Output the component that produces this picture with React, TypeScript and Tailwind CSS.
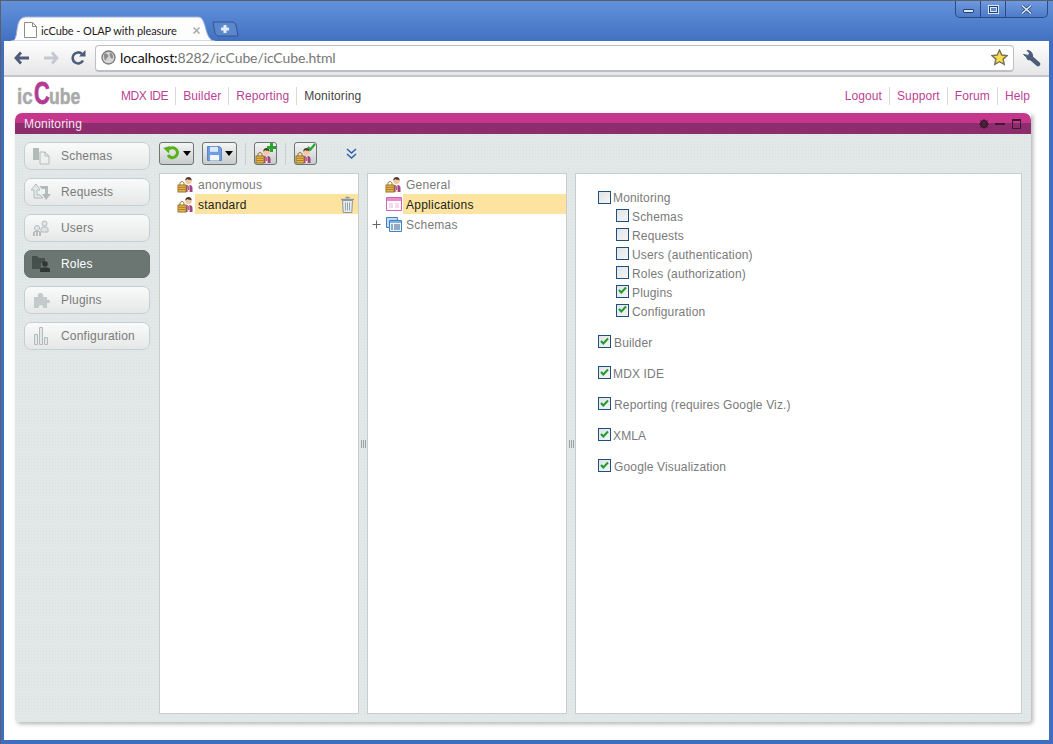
import type { ReactNode } from 'react'

const font = "[font-family:'Liberation_Sans',Arial,sans-serif]"

function RoleIcon() {
  return (
    <svg width="17" height="17" viewBox="0 0 17 17" className="shrink-0">
      <path d="M8 16v-4.500c0-1.500 1.200-2.500 2.500-2.500h2c1.800 0 3 1.200 3 3v4z" fill="#a0467f" />
      <path d="M10.800 9h1.600l.3 7h-2.200z" fill="#f4e6ee" />
      <path d="M11.300 10h.7l.2 4h-1z" fill="#b23a6a" />
      <circle cx="11.500" cy="5" r="3.200" fill="#f0c9a0" />
      <path d="M8.200 4.600C8.200 2 10 1 11.600 1s3 1.100 3 3.200c-1.500-.2-3.500-.2-4.500-1.200-.3.8-1 1.300-1.900 1.600z" fill="#4a3a30" />
      <path d="M3 9V7.500C3 6.300 3.900 5.600 5 5.600s2 .7 2 1.900V9" fill="none" stroke="#8a6a2a" />
      <rect x="1" y="9" width="8" height="7" fill="#e6b54a" stroke="#9a7226" />
      <path d="M1.500 11.300h7M1.500 13.500h7" stroke="#a8802e" />
    </svg>
  )
}

function SchemaIcon({ name }: { name: string }) {
  const c = name === 'Roles' ? '#3f4846' : '#b4baba'
  if (name === 'Schemas') {
    return (
      <svg width="18" height="18" viewBox="0 0 18 18">
        <path d="M1 1h6v12H1z" fill={c} />
        <path d="M8 5h5l4 4v8H8z" fill="#eef0f0" stroke={c} />
        <path d="M13 5v4h4" fill="none" stroke={c} />
      </svg>
    )
  }
  if (name === 'Requests') {
    return (
      <svg width="20" height="18" viewBox="0 0 20 18">
        <path d="M5 1 0 7h3v8h9l-3-3H6V7h3z" fill="#e4e7e7" stroke={c} />
        <path d="M15 17l5-6h-3V3H8l3 3h3v5h-3z" fill={c} />
      </svg>
    )
  }
  if (name === 'Users') {
    return (
      <svg width="18" height="17" viewBox="0 0 18 17">
        <circle cx="12.500" cy="3.500" r="2.500" fill="#e4e7e7" stroke={c} />
        <path d="M9 12V9c0-1 1-2 2-2h3c1 0 2 1 2 2v3z" fill="#dfe2e2" stroke={c} />
        <circle cx="5" cy="8" r="2.500" fill="#e4e7e7" stroke={c} />
        <path d="M1 16v-3c0-1 1-2 2-2h4c1 0 2 1 2 2v3z" fill={c} />
        <path d="M3.500 12v4M6.500 12v4" stroke="#eef0f0" />
      </svg>
    )
  }
  if (name === 'Roles') {
    return (
      <svg width="19" height="18" viewBox="0 0 19 18">
        <path d="M0 1h5l2 2h6v5H9v6H0z" fill="#454f4c" />
        <circle cx="13" cy="9" r="2.800" fill="#2f3735" />
        <path d="M8 17v-2c0-1.500 1-2.500 2.500-2.500h5c1.500 0 2.500 1 2.500 2.500v2z" fill="#2f3735" />
      </svg>
    )
  }
  if (name === 'Plugins') {
    return (
      <svg width="17" height="17" viewBox="0 0 17 17">
        <path d="M1 5h4c-1-3 1-4 2.500-4S11 2 10 5h4v3c2-1 3 .2 3 1.500S16 12 14 11v5h-4c.8-2-.6-2.800-2-2.800S5 14 6 16H1z" fill="#c4caca" />
      </svg>
    )
  }
  return (
    <svg width="15" height="18" viewBox="0 0 15 18">
      <path d="M.5 7.500h3v10h-3zM5.500.5h3v17h-3zM10.500 10.500h3v7h-3z" fill="#e4e7e7" stroke="#b4baba" />
    </svg>
  )
}

function SideButton({ name, active }: { name: string; active?: boolean }) {
  return (
    <div
      className={`flex h-[28px] w-[126px] items-center rounded-[7px] border ${
        active
          ? 'border-[#66716e] bg-[#6b7672] text-white'
          : 'border-[#c6cfcf] bg-gradient-to-b from-[#f9fafa] to-[#e6e8e8] text-[#7a7a7a]'
      }`}
    >
      <span className="flex w-[36px] shrink-0 justify-center pr-[4px]">
        <SchemaIcon name={name} />
      </span>
      <span className="tracking-[0.2px]">{name}</span>
    </div>
  )
}

function ToolButton({ children, w }: { children: ReactNode; w: string }) {
  return (
    <div className={`flex h-[23px] items-center justify-center rounded-[3px] border border-[#6f7472] bg-gradient-to-b from-[#f4f5f5] to-[#c9cccc] ${w}`}>
      {children}
    </div>
  )
}

function Caret() {
  return <span className="ml-[3px] h-0 w-0 border-x-[4px] border-t-[5px] border-x-transparent border-t-black" />
}

function Check({ on }: { on?: boolean }) {
  return (
    <span className="flex h-[13px] w-[13px] shrink-0 items-center justify-center border border-[#1d4f7f] bg-gradient-to-br from-[#e2e4e4] to-[#f4f4f4]">
      {on && (
        <svg width="11" height="10" viewBox="0 0 11 10">
          <path d="M2 4 4.300 6.500 9 1.500" fill="none" stroke="#1f9a2e" strokeWidth="2" />
        </svg>
      )}
    </span>
  )
}

function Splitter() {
  return (
    <div className="flex w-[8px] shrink-0 items-center justify-center gap-px">
      <span className="h-[8px] w-px bg-[#9aa2a2]" />
      <span className="h-[8px] w-px bg-[#9aa2a2]" />
      <span className="h-[8px] w-px bg-[#9aa2a2]" />
    </div>
  )
}

function TreeRow({ icon, label, selected, plus, trash }: { icon: ReactNode; label: string; selected?: boolean; plus?: boolean; trash?: boolean }) {
  return (
    <div className="flex h-[20px] items-center">
      <span className="flex w-[16px] shrink-0 justify-center">
        {plus && (
          <svg width="9" height="9" viewBox="0 0 9 9">
            <path d="M.5 4.500h8M4.500.5v8" stroke="#666" />
          </svg>
        )}
      </span>
      <span className="flex w-[19px] shrink-0 justify-center">{icon}</span>
      <span className={`flex h-[20px] flex-1 items-center justify-between pl-[3px] pr-[3px] pt-[2px] tracking-[0.25px] ${selected ? 'bg-[#fce4a0] text-[#222]' : 'text-[#7a7a7a]'}`}>
        {label}
        {trash && (
          <svg width="15" height="17" viewBox="0 0 15 17" className="-mt-[2px]">
            <path d="M1 3.500h13M5.500 1.500h4" stroke="#8b989f" strokeWidth="1.500" />
            <path d="M2.500 4.500h10l-.7 12H3.200z" fill="#e6ecef" stroke="#8b989f" />
            <path d="M5.500 6.500v8M7.500 6.500v8M9.500 6.500v8" stroke="#98a5ab" />
          </svg>
        )}
      </span>
    </div>
  )
}

const monitoring = [
  { label: 'Schemas' },
  { label: 'Requests' },
  { label: 'Users (authentication)' },
  { label: 'Roles (authorization)' },
  { label: 'Plugins', on: true },
  { label: 'Configuration', on: true },
]

const apps = [
  { label: 'Builder', gap: 'ml-[3px]' },
  { label: 'MDX IDE', gap: 'ml-[2px]' },
  { label: 'Reporting (requires Google Viz.)', gap: 'ml-[3px]' },
  { label: 'XMLA', gap: 'ml-[2px]' },
  { label: 'Google Visualization', gap: 'ml-[3px]' },
]

function NavLinks({ items, current }: { items: string[]; current?: string }) {
  return (
    <div className="flex items-center tracking-[0.1px]">
      {items.map((item, i) => (
        <span
          key={item}
          className={`flex h-[18px] items-center px-[7px] ${i < items.length - 1 ? 'border-r border-[#d8d8d8]' : ''} ${item === current ? 'text-[#444]' : 'text-[#bb3f94]'} ${item === 'MDX IDE' ? 'tracking-[-0.4px]' : ''}`}
        >
          {item}
        </span>
      ))}
    </div>
  )
}

export default function App() {
  const texture =
    'bg-[#e2e8e8] bg-[image:radial-gradient(#d9e1e2_1px,transparent_1px)] bg-[length:3px_3px]'
  return (
    <div className={`${font} flex h-[744px] w-[1053px] flex-col overflow-hidden border-t border-l border-[#5a5f6a] bg-gradient-to-b from-[#6292dc] from-[0%] to-[#3f6dbf] to-[6%] text-[12px] leading-none`}>
      {/* title bar */}
      <div className="relative flex h-[40px] shrink-0 justify-end pr-[5px]">
        <div className="flex h-[17px] w-[93px] items-center rounded-b-[5px] border border-t-0 border-[#2a4a80] bg-gradient-to-b from-[#6f9ae0] to-[#4e7bc8]">
          <span className="flex h-full w-[25px] items-center justify-center border-r border-[#2a4a80]">
            <span className="mt-[4px] h-[4px] w-[11px] rounded-[1px] border border-[#24406e] bg-[#dbe6f6]" />
          </span>
          <span className="flex h-full w-[25px] items-center justify-center border-r border-[#2a4a80]">
            <span className="flex h-[9px] w-[11px] items-center justify-center border border-[#dbe6f6] bg-[#24406e]">
              <span className="h-[5px] w-[7px] border border-[#dbe6f6] bg-[#5d88d0]" />
            </span>
          </span>
          <span className="flex flex-1 justify-center">
            <svg width="11" height="9" viewBox="0 0 11 9">
              <path d="M1 .5 10 8.500M10 .5 1 8.500" stroke="#24406e" strokeWidth="3" />
              <path d="M1 .5 10 8.500M10 .5 1 8.500" stroke="#e6eefa" strokeWidth="1.500" />
            </svg>
          </span>
        </div>
        {/* tab */}
        <svg width="240" height="25" viewBox="0 0 240 25" className="absolute left-[8px] top-[15px]">
          <path d="M204 6h19c2 0 3 1 4 3l2 11h-19c-2 0-3-1-4-3z" fill="#5b87cf" stroke="#34568f" />
          <path d="M212 13h8M216 9v8" stroke="#e3ecf8" strokeWidth="3" />
          <path d="M2 25c4 0 5-3 6-11 1-8 3-13 9-13h172c4 0 5 3 7 9 2 8 4 15 10 15z" fill="#fdfdfd" stroke="#9fb4d8" />
        </svg>
        <div className="absolute left-[23px] top-[21px] flex h-[16px] w-[170px] items-center">
          <svg width="13" height="16" viewBox="0 0 13 16" className="shrink-0">
            <path d="M.5.500h8l4 4v11H.5z" fill="#fff" stroke="#8d8d8d" />
            <path d="M8.500.5v4h4" fill="none" stroke="#8d8d8d" />
          </svg>
          <span className="ml-[4px] whitespace-nowrap text-[11px] tracking-[-0.1px] text-[#222] [font-family:'Lato',sans-serif]">icCube - OLAP with pleasure</span>
          <svg width="7" height="7" viewBox="0 0 7 7" className="absolute left-[169px] top-[5px]">
            <path d="M.5.5l6 6M6.500.5l-6 6" stroke="#a8a8a8" strokeWidth="1.500" />
          </svg>
        </div>
      </div>

      <div className="ml-[3px] mr-[4px] flex min-h-0 flex-1 flex-col bg-white">
        {/* browser toolbar */}
        <div className="flex h-[36px] shrink-0 items-center border-b-2 border-[#c4c6cc] bg-gradient-to-b from-[#ffffff] to-[#e6e6e8] pl-[10px]">
          <svg width="16" height="14" viewBox="0 0 16 14" className="shrink-0">
            <path d="M7 1.500 2 7l5 5.500M2 7h13" fill="none" stroke="#4d5c78" strokeWidth="2.800" />
          </svg>
          <svg width="16" height="14" viewBox="0 0 16 14" className="ml-[13px] shrink-0">
            <path d="M9 1.500 14 7l-5 5.500M14 7H1" fill="none" stroke="#c3c8d2" strokeWidth="2.800" />
          </svg>
          <svg width="16" height="16" viewBox="0 0 16 16" className="ml-[11px] shrink-0">
            <path d="M13 10.500A5.500 5.500 0 1 1 12 4" fill="none" stroke="#4d5c78" strokeWidth="2.600" />
            <path d="M9 6.500h6.500V0z" fill="#4d5c78" />
          </svg>
          <div className="ml-[9px] flex h-[27px] w-[919px] items-center rounded-[4px] border border-[#bcbfc4] border-b-2 bg-white pl-[5px] pr-[5px]">
            <svg width="15" height="15" viewBox="0 0 15 15" className="shrink-0">
              <circle cx="7.500" cy="7.500" r="6.500" fill="#d5d5d5" stroke="#777" strokeWidth="1.300" />
              <path d="M3 4c2-1 3 0 4 1s0 2-1 3-1 3-2 2-1-4-1-6zM9 3c2 0 3 2 3 4s-1 2-2 1-2-4-1-5z" fill="#8c8c8c" />
            </svg>
            <span className="ml-[4px] flex-1 whitespace-nowrap text-[14px] tracking-[-0.1px] text-[#777] [font-family:'Lato',sans-serif]">
              <span className="text-[#111]">localhost:</span>8282/icCube/icCube.html
            </span>
            <svg width="17" height="17" viewBox="0 0 24 24" className="shrink-0">
              <path d="m12 1.500 3.200 7 7.500.8-5.600 5 1.600 7.500-6.700-3.800-6.700 3.800 1.600-7.500-5.600-5 7.500-.8z" fill="#fbdc4a" stroke="#75725a" strokeWidth="2" />
            </svg>
          </div>
          <svg width="18" height="17" viewBox="0 0 18 17" className="ml-[9px] shrink-0">
            <path d="M7.500 7.500 15 14" fill="none" stroke="#4d5c78" strokeWidth="4.500" strokeLinecap="round" />
            <path d="M.5 4.500 3.500 7l1 2.500c2 1 4.500 0 5-2.500.3-1.500 0-3-1-4.500C7.500 1 6 .5 4 .5L6.500 3 5.500 5.500 3 5z" fill="#4d5c78" stroke="#4d5c78" />
          </svg>
        </div>

        {/* app header */}
        <div className="flex h-[36px] shrink-0 items-start justify-between pl-[13px] pr-[12px]">
          <div className="flex items-start">
            <div className="mt-[5px] flex h-[23px] w-[64px] items-baseline whitespace-nowrap font-bold text-[#a9a9a9] [-webkit-text-stroke:0.5px_#a9a9a9]">
              <span className="inline-block w-[17px] origin-left scale-x-[0.85] text-[22px] leading-[23px]">ic</span>
              <span className="inline-block w-[15px] origin-left scale-x-[0.68] text-[32px] leading-[23px] text-[#b23a94] [-webkit-text-stroke:0.8px_#b23a94]">C</span>
              <span className="inline-block w-[31px] origin-left scale-x-[0.8] text-[22px] leading-[23px]">ube</span>
            </div>
            <div className="ml-[33px] mt-[10px]">
              <NavLinks items={['MDX IDE', 'Builder', 'Reporting', 'Monitoring']} current="Monitoring" />
            </div>
          </div>
          <div className="mt-[10px]">
            <NavLinks items={['Logout', 'Support', 'Forum', 'Help']} />
          </div>
        </div>

        {/* monitoring panel */}
        <div className="ml-[11px] flex h-[609px] w-[1016px] shrink-0 flex-col rounded-b-[4px] shadow-[2px_2px_4px_rgba(0,0,0,0.3)]">
          <div className="flex h-[21px] shrink-0 items-center justify-between rounded-t-[7px] bg-gradient-to-b from-[#c4378d] from-[48%] to-[#8e2d6e] to-[48%] pl-[9px] pr-[10px] tracking-[0.2px] text-[#f4e6f0]">
            Monitoring
            <div className="flex items-center">
              <svg width="10" height="10" viewBox="0 0 10 10">
                <circle cx="5" cy="5" r="3" fill="none" stroke="#3a1a30" strokeWidth="2" />
                <path d="M5 0v10M0 5h10M1.500 1.500l7 7M8.500 1.500l-7 7" stroke="#3a1a30" strokeWidth="1" />
              </svg>
              <span className="ml-[6px] h-[2px] w-[10px] bg-[#3a1a30]" />
              <span className="ml-[7px] h-[10px] w-[9px] border border-t-2 border-[#3a1a30]" />
            </div>
          </div>

          <div className={`flex min-h-0 flex-1 gap-[9px] rounded-b-[4px] pb-[8px] pl-[9px] pr-[9px] pt-[8px] ${texture}`}>
            <div className="flex w-[126px] shrink-0 flex-col gap-[8px]">
              <SideButton name="Schemas" />
              <SideButton name="Requests" />
              <SideButton name="Users" />
              <SideButton name="Roles" active />
              <SideButton name="Plugins" />
              <SideButton name="Configuration" />
            </div>

            <div className="flex min-w-0 flex-1 flex-col gap-[8px]">
              <div className="flex h-[23px] shrink-0 items-center">
                <ToolButton w="w-[35px]">
                  <svg width="17" height="16" viewBox="0 0 17 16">
                    <path d="M5 9a5 5 0 1 0 1-6" fill="none" stroke="#56b31c" strokeWidth="3" />
                    <path d="M1 1l7 0-3 7z" fill="#56b31c" transform="rotate(-15 4 4)" />
                  </svg>
                  <Caret />
                </ToolButton>
                <span className="ml-[8px]">
                  <ToolButton w="w-[35px]">
                    <svg width="15" height="15" viewBox="0 0 15 15">
                      <path d="M.5.500h12l2 2v12H.5z" fill="#6d9fe0" stroke="#5b86c4" />
                      <path d="M3 .8h8v5H3z" fill="#dfe9f6" />
                      <path d="M3 9h9v5.500H3z" fill="#f2f6fb" />
                    </svg>
                    <Caret />
                  </ToolButton>
                </span>
                <span className="ml-[8px] h-[22px] w-px bg-[#c9cfcf]" />
                <span className="ml-[8px]">
                  <ToolButton w="w-[23px]">
                    <span className="relative flex h-[21px] w-[21px] items-end">
                      <RoleIcon />
                      <svg width="9" height="9" viewBox="0 0 9 9" className="absolute right-0 top-0">
                        <path d="M4.500 0v9M0 4.500h9" stroke="#2aa52e" strokeWidth="3" />
                      </svg>
                    </span>
                  </ToolButton>
                </span>
                <span className="ml-[8px] h-[22px] w-px bg-[#c9cfcf]" />
                <span className="ml-[8px]">
                  <ToolButton w="w-[23px]">
                    <span className="relative flex h-[21px] w-[21px] items-end">
                      <RoleIcon />
                      <svg width="9" height="8" viewBox="0 0 9 8" className="absolute right-0 top-0">
                        <path d="M1 4l2.500 2.500L8 1" fill="none" stroke="#2aa52e" strokeWidth="2.200" />
                      </svg>
                    </span>
                  </ToolButton>
                </span>
                <svg width="11" height="11" viewBox="0 0 11 11" className="ml-[29px]">
                  <path d="M1 1l4.500 4L10 1M1 6l4.500 4L10 6" fill="none" stroke="#2f5fa8" strokeWidth="1.500" />
                </svg>
              </div>

              <div className="flex min-h-0 flex-1">
                <div className="h-full w-[200px] shrink-0 border border-[#c8cdcd] bg-white">
                  <TreeRow icon={<RoleIcon />} label="anonymous" />
                  <TreeRow icon={<RoleIcon />} label="standard" selected trash />
                </div>
                <Splitter />
                <div className="h-full w-[200px] shrink-0 border border-[#c8cdcd] bg-white">
                  <TreeRow icon={<RoleIcon />} label="General" />
                  <TreeRow
                    label="Applications"
                    selected
                    icon={
                      <svg width="16" height="14" viewBox="0 0 16 14">
                        <path d="M.5.500h15v13H.5z" fill="#fff" stroke="#d560b8" />
                        <path d="M1 1h14v3H1z" fill="#e88ccf" />
                        <path d="M3 6h4v5H3zM9 6h4v5H9z" fill="#f6d9ee" />
                      </svg>
                    }
                  />
                  <TreeRow
                    label="Schemas"
                    plus
                    icon={
                      <svg width="16" height="15" viewBox="0 0 16 15">
                        <path d="M.5.500h11v10H.5z" fill="#c7dcf2" stroke="#3f82c2" />
                        <path d="M3.500 3.500h12v11h-12z" fill="#eef5fb" stroke="#3f82c2" />
                        <path d="M4 4h11v2H4z" fill="#7fb1e2" />
                        <path d="M5 8h2M8 8h6M5 10h2M8 10h6M5 12h2M8 12h6" stroke="#3a5f88" />
                      </svg>
                    }
                  />
                </div>
                <Splitter />
                <div className="h-full flex-1 border border-[#c8cdcd] bg-white pl-[22px] pt-[16px] tracking-[0.15px] text-[#7a7a7a]">
                  <div className="flex h-[16px] items-center gap-[2px]">
                    <span className="-mt-[2px]"><Check /></span>
                    Monitoring
                  </div>
                  <div className="mt-[1px] flex flex-col pl-[18px]">
                    {monitoring.map((m) => (
                      <div key={m.label} className="flex h-[19px] items-center gap-[3px]">
                        <span className="-mt-[3px]"><Check on={m.on} /></span>
                        {m.label}
                      </div>
                    ))}
                  </div>
                  <div className="mt-[14px] flex flex-col gap-[15px]">
                    {apps.map((a) => (
                      <div key={a.label} className="flex h-[16px] items-center">
                        <span className="-mt-[3px]"><Check on /></span>
                        <span className={a.gap}>{a.label}</span>
                      </div>
                    ))}
                  </div>
                </div>
              </div>
            </div>
          </div>
        </div>
      </div>
      <div className="h-[4px] shrink-0" />
    </div>
  )
}
